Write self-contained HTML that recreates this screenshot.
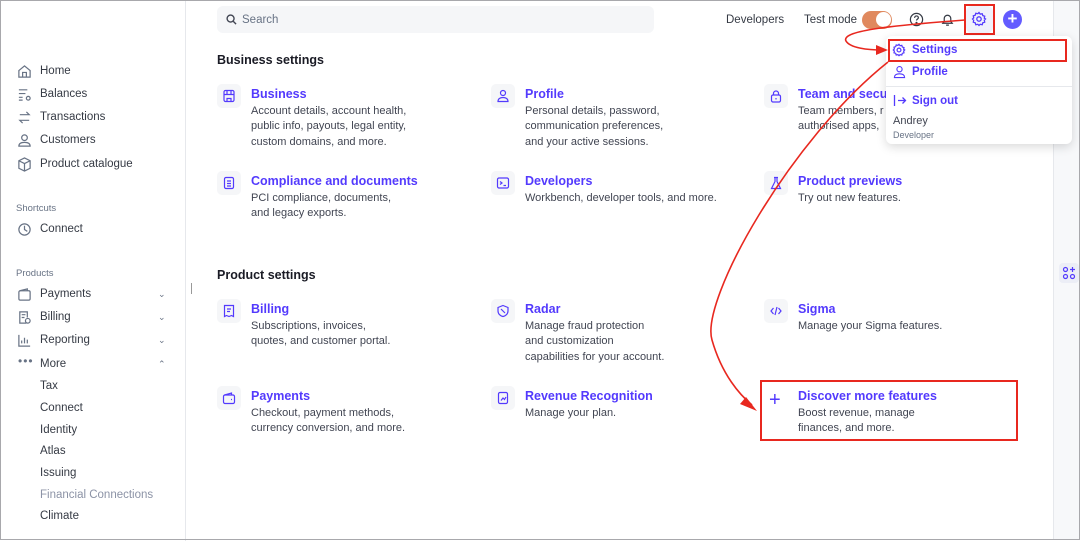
<!DOCTYPE html>
<html><head><meta charset="utf-8"><style>
*{box-sizing:border-box;margin:0;padding:0}
body{width:1080px;height:540px;overflow:hidden;background:#fff;font-family:"Liberation Sans",sans-serif;color:#414552;position:relative}
.frame{position:absolute;left:0;top:0;width:1080px;height:540px;border:1px solid #a8a8ac;pointer-events:none;z-index:20}
.side{position:absolute;left:0;top:1px;width:186px;height:540px;border-right:1px solid #e6e8ec}
.nav{position:absolute;left:40px;font-size:11.5px;color:#353a44}
.ico{position:absolute;left:17px;width:15px;height:15px}
.sec{position:absolute;left:16px;font-size:9.5px;color:#687385}
.chev{position:absolute;left:158px;font-size:9px;color:#687385}
.abs{position:absolute}
h2{position:absolute;font-size:12.5px;font-weight:bold;color:#1a1b25}
.card{position:absolute;left:0;top:1.5px;width:1080px;height:540px}
.card .t{position:absolute;font-size:12.5px;font-weight:bold;color:#533afd;white-space:nowrap}
.card .d{position:absolute;font-size:11px;line-height:15.7px;color:#414552;white-space:nowrap}
.ib{position:absolute;width:24px;height:24px;background:#f5f6f8;border-radius:5px}
.ib svg{position:absolute;left:5px;top:5px}
</style></head><body>
<div class="frame"></div>
<div class="side">
 <svg class="ico" style="top:63px" viewBox="0 0 16 16" fill="none" stroke="#687385" stroke-width="1.3"><path d="M2 7l6-5 6 5v7H2z M6 14V9h4v5"/></svg><div class="nav" style="top:64px">Home</div>
 <svg class="ico" style="top:86px" viewBox="0 0 16 16" fill="none" stroke="#687385" stroke-width="1.3"><path d="M2 3h9M2 7h7M2 11h4M2 14h4"/><circle cx="12" cy="12" r="2"/></svg><div class="nav" style="top:87px">Balances</div>
 <svg class="ico" style="top:109px" viewBox="0 0 16 16" fill="none" stroke="#687385" stroke-width="1.3"><path d="M3 5h10l-3-3M13 11H3l3 3"/></svg><div class="nav" style="top:110px">Transactions</div>
 <svg class="ico" style="top:132px" viewBox="0 0 16 16" fill="none" stroke="#687385" stroke-width="1.3"><circle cx="8" cy="5" r="3"/><path d="M2 14c0-3 3-4 6-4s6 1 6 4z"/></svg><div class="nav" style="top:133px">Customers</div>
 <svg class="ico" style="top:156px" viewBox="0 0 16 16" fill="none" stroke="#687385" stroke-width="1.3"><path d="M8 1l6 3v8l-6 3-6-3V4z M2 4l6 3 6-3M8 7v8"/></svg><div class="nav" style="top:157px">Product catalogue</div>
 <div class="sec" style="top:202px">Shortcuts</div>
 <svg class="ico" style="top:221px" viewBox="0 0 16 16" fill="none" stroke="#687385" stroke-width="1.3"><circle cx="8" cy="8" r="6"/><path d="M8 4v4l3 2"/></svg><div class="nav" style="top:222px">Connect</div>
 <div class="sec" style="top:267px">Products</div>
 <svg class="ico" style="top:286px" viewBox="0 0 16 16" fill="none" stroke="#687385" stroke-width="1.3"><rect x="2" y="4" width="12" height="10" rx="1.5"/><path d="M3 4l8-2v2"/></svg><div class="nav" style="top:287px">Payments</div><div class="chev" style="top:288px">⌄</div>
 <svg class="ico" style="top:309px" viewBox="0 0 16 16" fill="none" stroke="#687385" stroke-width="1.3"><path d="M10 14H3V2h8v6M5 5h4M5 8h3"/><circle cx="11.5" cy="11.5" r="2.5"/></svg><div class="nav" style="top:310px">Billing</div><div class="chev" style="top:311px">⌄</div>
 <svg class="ico" style="top:332px" viewBox="0 0 16 16" fill="none" stroke="#687385" stroke-width="1.3"><path d="M2 2v12h12M5 11V8M8 11V5M11 11V7"/></svg><div class="nav" style="top:333px">Reporting</div><div class="chev" style="top:334px">⌄</div>
 <div class="abs" style="left:18px;top:353px;font-size:12px;color:#687385;letter-spacing:1px">•••</div><div class="nav" style="top:357px">More</div><div class="chev" style="top:358px">⌃</div>
 <div class="nav" style="top:379px">Tax</div>
 <div class="nav" style="top:401px">Connect</div>
 <div class="nav" style="top:423px">Identity</div>
 <div class="nav" style="top:444px">Atlas</div>
 <div class="nav" style="top:466px">Issuing</div>
 <div class="nav" style="top:488px;color:#8c93a6">Financial Connections</div>
 <div class="nav" style="top:509px">Climate</div>
</div>
<div class="abs" style="left:191px;top:283px;width:1px;height:11px;background:#999"></div>
<div class="abs" style="left:217px;top:6px;width:437px;height:27px;background:#f5f6f8;border-radius:6px"></div>
<svg class="abs" style="left:226px;top:14px" width="11" height="11" viewBox="0 0 12 12" fill="none" stroke="#414552" stroke-width="1.5"><circle cx="5" cy="5" r="3.8"/><path d="M8 8l3 3"/></svg>
<div class="abs" style="left:242px;top:14px;font-size:11.5px;color:#687385">Search</div>
<div class="abs" style="left:726px;top:14px;font-size:11.5px;color:#353a44">Developers</div>
<div class="abs" style="left:804px;top:14px;font-size:11.5px;color:#353a44">Test mode</div>
<div class="abs" style="left:862px;top:11px;width:30px;height:18px;border-radius:9px;background:#e0895e"></div>
<div class="abs" style="left:876px;top:12px;width:15px;height:15px;border-radius:50%;background:#fff"></div>
<svg class="abs" style="left:909px;top:12px" width="15" height="15" viewBox="0 0 16 16" fill="none" stroke="#353a44" stroke-width="1.3"><circle cx="8" cy="8" r="6.5"/><path d="M6 6.2c0-1.2 1-2 2-2s2 .8 2 1.9c0 1.5-2 1.5-2 3"/><circle cx="8" cy="11.5" r=".5" fill="#353a44"/></svg>
<svg class="abs" style="left:940px;top:12px" width="15" height="15" viewBox="0 0 16 16" fill="none" stroke="#353a44" stroke-width="1.3"><path d="M3 12h10l-1.5-2V7a3.5 3.5 0 00-7 0v3z M6.5 14h3"/></svg>
<div class="abs" style="left:966px;top:6px;width:27px;height:27px;border-radius:6px;background:#f0f1fb"></div>
<svg class="abs" style="left:971px;top:11px" width="16" height="16" viewBox="0 0 16 16" fill="none" stroke="#533afd" stroke-width="1.3"><circle cx="8" cy="8" r="2.2"/><path d="M8 1.5l1.2 1.6 2-.4.6 1.9 1.9.6-.4 2L14.5 8l-1.2 1.2.4 2-1.9.6-.6 1.9-2-.4L8 14.5l-1.2-1.2-2 .4-.6-1.9-1.9-.6.4-2L1.5 8l1.2-1.2-.4-2 1.9-.6.6-1.9 2 .4z"/></svg>
<div class="abs" style="left:964px;top:4px;width:31px;height:31px;border:2px solid #e8281f"></div>
<div class="abs" style="left:1003px;top:10px;width:19px;height:19px;border-radius:50%;background:#635bff;color:#fff;font-size:17px;line-height:18px;text-align:center;font-weight:bold">+</div>
<div class="abs" style="left:1053px;top:0;width:27px;height:540px;background:#f7f8fa;border-left:1px solid #e6e8ec"></div>
<div class="abs" style="left:1059px;top:263px;width:20px;height:20px;background:#eceef6;border-radius:4px"></div>
<svg class="abs" style="left:1062px;top:266px" width="14" height="14" viewBox="0 0 14 14" fill="none" stroke="#533afd" stroke-width="1.2"><circle cx="3.5" cy="3.5" r="2"/><circle cx="3.5" cy="10.5" r="2"/><circle cx="10.5" cy="10.5" r="2"/><path d="M10.5 1v5M8 3.5h5"/></svg>
<h2 style="left:217px;top:53px">Business settings</h2>
<h2 style="left:217px;top:268px">Product settings</h2>
<div class="card">
 <div class="ib" style="left:217px;top:82px"><svg width="14" height="14" viewBox="0 0 14 14" fill="none" stroke="#533afd" stroke-width="1.2"><rect x="2" y="1.5" width="10" height="11" rx="1.5"/><path d="M2 5.5h10M5 1.5v4M9 1.5v4M5 12.5v-3h4v3"/></svg></div>
 <div class="t" style="left:251px;top:85px">Business</div>
 <div class="d" style="left:251px;top:102px">Account details, account health,<br>public info, payouts, legal entity,<br>custom domains, and more.</div>
 <div class="ib" style="left:491px;top:82px"><svg width="14" height="14" viewBox="0 0 14 14" fill="none" stroke="#533afd" stroke-width="1.2"><circle cx="7" cy="4" r="2.5"/><path d="M2 12.5c0-3 2.5-4 5-4s5 1 5 4z"/></svg></div>
 <div class="t" style="left:525px;top:85px">Profile</div>
 <div class="d" style="left:525px;top:102px">Personal details, password,<br>communication preferences,<br>and your active sessions.</div>
 <div class="ib" style="left:764px;top:82px"><svg width="14" height="14" viewBox="0 0 14 14" fill="none" stroke="#533afd" stroke-width="1.2"><rect x="2.5" y="6" width="9" height="7" rx="1.5"/><path d="M4.5 6V4.5a2.5 2.5 0 015 0V6M7 9v1.5"/></svg></div>
 <div class="t" style="left:798px;top:85px">Team and secu</div>
 <div class="d" style="left:798px;top:102px">Team members, r<br>authorised apps,</div>
 <div class="ib" style="left:217px;top:169px"><svg width="14" height="14" viewBox="0 0 14 14" fill="none" stroke="#533afd" stroke-width="1.2"><rect x="2.5" y="1.5" width="9" height="11" rx="1.5"/><path d="M5 5h4M5 7.5h4M5 10h4"/></svg></div>
 <div class="t" style="left:251px;top:172px">Compliance and documents</div>
 <div class="d" style="left:251px;top:189px">PCI compliance, documents,<br>and legacy exports.</div>
 <div class="ib" style="left:491px;top:169px"><svg width="14" height="14" viewBox="0 0 14 14" fill="none" stroke="#533afd" stroke-width="1.2"><rect x="1.5" y="2" width="11" height="10" rx="1.5"/><path d="M4 5.5l2 1.5-2 1.5M7.5 9.5h2.5"/></svg></div>
 <div class="t" style="left:525px;top:172px">Developers</div>
 <div class="d" style="left:525px;top:189px">Workbench, developer tools, and more.</div>
 <div class="ib" style="left:764px;top:169px"><svg width="14" height="14" viewBox="0 0 14 14" fill="none" stroke="#533afd" stroke-width="1.2"><path d="M5 1.5h4M6 1.5v4L2.5 12.5h9L8 5.5v-4"/></svg></div>
 <div class="t" style="left:798px;top:172px">Product previews</div>
 <div class="d" style="left:798px;top:189px">Try out new features.</div>
 <div class="ib" style="left:217px;top:297px"><svg width="14" height="14" viewBox="0 0 14 14" fill="none" stroke="#533afd" stroke-width="1.2"><path d="M2.5 1.5h9v11l-2-1-2.5 1-2.5-1-2 1z M5 5h4M5 7.5h3"/></svg></div>
 <div class="t" style="left:251px;top:300px">Billing</div>
 <div class="d" style="left:251px;top:317px">Subscriptions, invoices,<br>quotes, and customer portal.</div>
 <div class="ib" style="left:491px;top:297px"><svg width="14" height="14" viewBox="0 0 14 14" fill="none" stroke="#533afd" stroke-width="1.2"><path d="M7 1.5l5 2v3.5c0 3-2.5 5-5 5.5-2.5-.5-5-2.5-5-5.5V3.5z M5 5l4 4"/></svg></div>
 <div class="t" style="left:525px;top:300px">Radar</div>
 <div class="d" style="left:525px;top:317px">Manage fraud protection<br>and customization<br>capabilities for your account.</div>
 <div class="ib" style="left:764px;top:297px"><svg width="14" height="14" viewBox="0 0 14 14" fill="none" stroke="#533afd" stroke-width="1.2"><path d="M4.5 4L2 7l2.5 3M9.5 4L12 7l-2.5 3M8 3L6 11"/></svg></div>
 <div class="t" style="left:798px;top:300px">Sigma</div>
 <div class="d" style="left:798px;top:317px">Manage your Sigma features.</div>
 <div class="ib" style="left:217px;top:384px"><svg width="14" height="14" viewBox="0 0 14 14" fill="none" stroke="#533afd" stroke-width="1.2"><rect x="1.5" y="4" width="11" height="8.5" rx="1.5"/><path d="M2.5 4l7-2v2M9 8.5h1"/></svg></div>
 <div class="t" style="left:251px;top:387px">Payments</div>
 <div class="d" style="left:251px;top:404px">Checkout, payment methods,<br>currency conversion, and more.</div>
 <div class="ib" style="left:491px;top:384px"><svg width="14" height="14" viewBox="0 0 14 14" fill="none" stroke="#533afd" stroke-width="1.2"><rect x="2.5" y="1.5" width="9" height="11" rx="1.5"/><path d="M5 9.5l2-2.5 1.5 1.5L10 6"/></svg></div>
 <div class="t" style="left:525px;top:387px">Revenue Recognition</div>
 <div class="d" style="left:525px;top:404px">Manage your plan.</div>
 <div class="abs" style="left:769px;top:388px;font-size:20px;color:#533afd;line-height:20px">+</div>
 <div class="t" style="left:798px;top:387px">Discover more features</div>
 <div class="d" style="left:798px;top:404px">Boost revenue, manage<br>finances, and more.</div>
</div>
<div class="abs" style="left:760px;top:380px;width:258px;height:61px;border:2px solid #e8281f"></div>
<div class="abs" style="left:886px;top:36px;width:186px;height:108px;background:#fff;border-radius:6px;box-shadow:0 3px 10px rgba(0,0,0,.15)"></div>
<svg class="abs" style="left:892px;top:43px" width="14" height="14" viewBox="0 0 16 16" fill="none" stroke="#533afd" stroke-width="1.4"><circle cx="8" cy="8" r="2.2"/><path d="M8 1.5l1.2 1.6 2-.4.6 1.9 1.9.6-.4 2L14.5 8l-1.2 1.2.4 2-1.9.6-.6 1.9-2-.4L8 14.5l-1.2-1.2-2 .4-.6-1.9-1.9-.6.4-2L1.5 8l1.2-1.2-.4-2 1.9-.6.6-1.9 2 .4z"/></svg>
<div class="abs" style="left:912px;top:44px;font-size:11.5px;font-weight:bold;color:#533afd">Settings</div>
<div class="abs" style="left:888px;top:39px;width:179px;height:23px;border:2px solid #e8281f"></div>
<svg class="abs" style="left:893px;top:65px" width="13" height="14" viewBox="0 0 14 14" fill="none" stroke="#533afd" stroke-width="1.2"><circle cx="7" cy="4" r="2.8"/><path d="M1.5 13c0-3 2.5-4 5.5-4s5.5 1 5.5 4z"/></svg>
<div class="abs" style="left:912px;top:66px;font-size:11.5px;font-weight:bold;color:#533afd">Profile</div>
<div class="abs" style="left:886px;top:86px;width:186px;height:1px;background:#e6e8ec"></div>
<svg class="abs" style="left:893px;top:94px" width="14" height="13" viewBox="0 0 14 13" fill="none" stroke="#533afd" stroke-width="1.3"><path d="M1.5 1v11M5 6.5h7.5M9.5 3.5l3 3-3 3"/></svg>
<div class="abs" style="left:912px;top:95px;font-size:11.5px;font-weight:bold;color:#533afd">Sign out</div>
<div class="abs" style="left:893px;top:115px;font-size:11px;color:#414552">Andrey</div>
<div class="abs" style="left:893px;top:130px;font-size:9px;color:#687385">Developer</div>
<svg class="abs" style="left:0;top:0;z-index:10" width="1080" height="540" viewBox="0 0 1080 540" fill="none">
<path d="M965 20 C900 25 840 30 846 41 C850 48 868 50 882 50" stroke="#e8281f" stroke-width="1.6"/>
<path d="M876 45 L888 50 L876 55 z" fill="#e8281f"/>
<path d="M888 62 C790 140 700 300 712 340 C722 375 740 395 752 405" stroke="#e8281f" stroke-width="1.6"/>
<path d="M746 397 L757 411 L740 404 z" fill="#e8281f"/>
</svg>
</body></html>
